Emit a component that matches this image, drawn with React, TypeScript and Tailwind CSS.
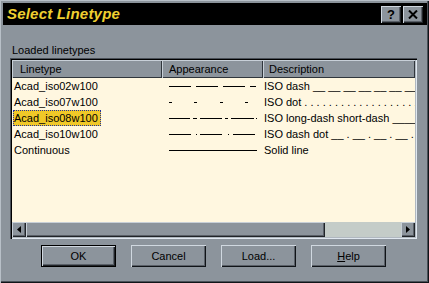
import React from "react";

const FONT = { fontFamily: '"Liberation Sans", Arial, sans-serif' };

type Seg = [number, number];

const rows: { name: string; segs: Seg[]; desc: string }[] = [
  {
    name: "Acad_iso02w100",
    segs: [[7, 29], [34, 56], [61, 83], [88, 94]],
    desc: "ISO dash __ __ __ __ __ __ __ __ __ __ __ __",
  },
  {
    name: "Acad_iso07w100",
    segs: [[7, 10], [32, 35], [58, 61], [83, 86]],
    desc: "ISO dot . . . . . . . . . . . . . . . . . . . . . . . . . . .",
  },
  {
    name: "Acad_iso08w100",
    segs: [[7, 28], [31, 35], [38, 60], [63, 66], [69, 92], [94, 95]],
    desc: "ISO long-dash short-dash ____ __ ____ __ ____",
  },
  {
    name: "Acad_iso10w100",
    segs: [[7, 29], [34, 35], [38, 60], [66, 67], [71, 93]],
    desc: "ISO dash dot __ . __ . __ . __ . __ . __ .",
  },
  { name: "Continuous", segs: [[7, 95]], desc: "Solid line" },
];

function LinePreview({ segs }: { segs: Seg[] }) {
  return (
    <svg width="101" height="16" className="shrink-0">
      {segs.map(([a, b], i) => (
        <rect key={i} x={a} y={8} width={b - a} height={1} fill="#000" />
      ))}
    </svg>
  );
}

function HeaderCell({ label, className }: { label: string; className: string }) {
  return (
    <div
      className={`h-full flex items-center bg-[#8c949c] shadow-[inset_1px_1px_0_#c8d0d8,inset_-1px_-1px_0_#30363c] text-[11px] text-black ${className}`}
    >
      {label}
    </div>
  );
}

function ArrowButton({ dir }: { dir: "left" | "right" }) {
  return (
    <div className="w-[14px] h-full flex items-center justify-center bg-[#8c949c] shadow-[inset_1px_1px_0_#c8d0d8,inset_-1px_-1px_0_#202428,inset_-2px_-2px_0_#5a6068]">
      <svg width="4" height="7">
        {dir === "left" ? (
          <polygon points="4,0 4,7 0,3.5" fill="#000" />
        ) : (
          <polygon points="0,0 0,7 4,3.5" fill="#000" />
        )}
      </svg>
    </div>
  );
}

function DlgButton({ children, isDefault }: { children: React.ReactNode; isDefault?: boolean }) {
  return (
    <div
      className={`w-[75px] h-[22px] flex items-center justify-center text-[11px] text-black bg-[#8c949c] ${
        isDefault
          ? "border border-black shadow-[inset_1px_1px_0_#d0d8e0,inset_-1px_-1px_0_#202428,inset_-2px_-2px_0_#5a6068]"
          : "shadow-[inset_1px_1px_0_#d0d8e0,inset_-1px_-1px_0_#101418,inset_-2px_-2px_0_#5a6068]"
      }`}
    >
      {children}
    </div>
  );
}

export default function App() {
  return (
    <div
      className="w-[429px] h-[283px] flex flex-col bg-[#8c949c] pt-[3px] pl-[3px] pr-[2px] pb-[2px] shadow-[inset_1px_1px_0_#b8c0c8,inset_-1px_-1px_0_#101418,inset_-2px_-2px_0_#4a5058] overflow-hidden"
      style={FONT}
    >
      {/* title bar */}
      <div className="h-[22px] bg-black flex items-center justify-between pl-[4px] pr-[4px]">
        <span className="text-[15px] font-bold italic text-[#f0d030] tracking-[0.2px]">
          Select Linetype
        </span>
        <div className="flex gap-[2px]">
          <div className="w-[20px] h-[17px] flex items-center justify-center bg-[#8c949c] shadow-[inset_1px_1px_0_#d0d8e0,inset_-1px_-1px_0_#202428,inset_-2px_-2px_0_#5a6068] text-[13px] font-bold text-black leading-none">
            ?
          </div>
          <div className="w-[20px] h-[17px] flex items-center justify-center bg-[#8c949c] shadow-[inset_1px_1px_0_#d0d8e0,inset_-1px_-1px_0_#202428,inset_-2px_-2px_0_#5a6068]">
            <svg width="10" height="9">
              <path d="M1 0.5 L9 8.5 M9 0.5 L1 8.5" stroke="#000" strokeWidth="2" />
            </svg>
          </div>
        </div>
      </div>

      {/* label */}
      <div className="mt-[19px] pl-[9px] text-[11px] leading-[13px] text-black">
        Loaded linetypes
      </div>

      {/* list view */}
      <div className="mt-[1px] ml-[7px] w-[407px] h-[181px] p-[2px] bg-[#fff7e0] shadow-[inset_1px_1px_0_#4a5058,inset_2px_2px_0_#000,inset_-1px_-1px_0_#e0e8f0,inset_-2px_-2px_0_#b0b8c0] flex flex-col">
        <div className="h-[18px] flex shrink-0">
          <HeaderCell label="Linetype" className="w-[150px] pl-[8px]" />
          <HeaderCell label="Appearance" className="w-[101px] pl-[7px]" />
          <HeaderCell label="Description" className="flex-1 pl-[6px]" />
        </div>
        <div className="flex-1 flex flex-col">
          {rows.map((r, i) => (
            <div key={r.name} className="h-[16px] flex items-center text-[11px] text-black">
              <div className="w-[150px] pl-[1px] flex items-center">
                <span
                  className={
                    i === 2
                      ? "bg-[#f0c828] border border-dotted border-[#2030a0] leading-[14px] pr-[2px]"
                      : "leading-[16px] px-[1px]"
                  }
                >
                  {r.name}
                </span>
              </div>
              <LinePreview segs={r.segs} />
              <div className="flex-1 pl-[1px] whitespace-nowrap overflow-hidden">{r.desc}</div>
            </div>
          ))}
        </div>
        {/* horizontal scrollbar */}
        <div className="h-[15px] flex shrink-0">
          <ArrowButton dir="left" />
          <div className="w-[299px] h-full bg-[#8c949c] shadow-[inset_1px_1px_0_#c8d0d8,inset_-1px_-1px_0_#202428,inset_-2px_-2px_0_#5a6068]" />
          <div className="flex-1 h-full bg-[#c4ccc8]" />
          <ArrowButton dir="right" />
        </div>
      </div>

      {/* buttons */}
      <div className="mt-[6px] pl-[38px] flex gap-[15px]">
        <DlgButton isDefault>OK</DlgButton>
        <DlgButton>Cancel</DlgButton>
        <DlgButton>Load...</DlgButton>
        <DlgButton>
          <span>
            <span className="underline">H</span>elp
          </span>
        </DlgButton>
      </div>
    </div>
  );
}
